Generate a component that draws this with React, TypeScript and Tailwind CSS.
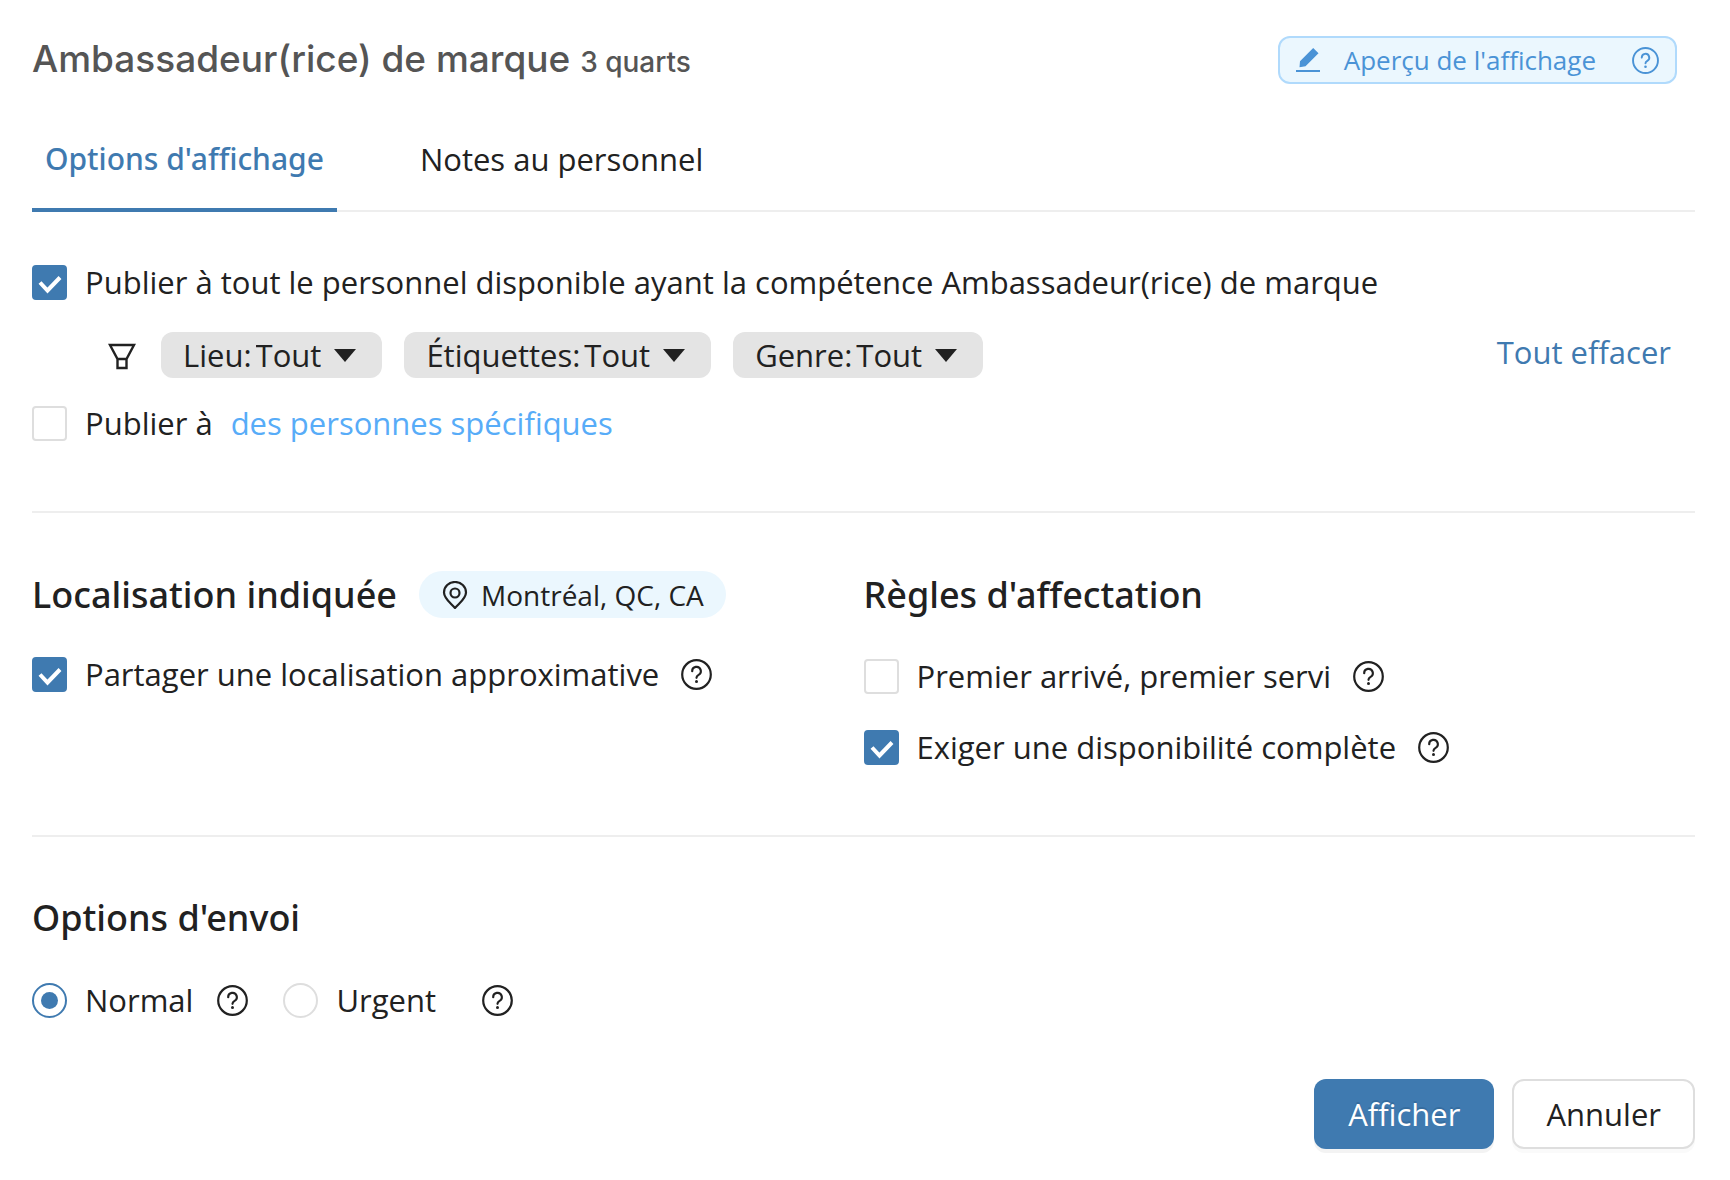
import { useState } from "react";
import type { ReactNode } from "react";

function HelpIcon({ className }: { className: string }) {
  return (
    <svg viewBox="0 0 31 31" fill="none" stroke="currentColor" strokeWidth="2.2" strokeLinecap="round" className={className} aria-hidden="true">
      <circle cx="15.5" cy="15.5" r="14.3" />
      <path d="M11.2 12.2a4.3 4.3 0 1 1 6.4 3.7c-1.4.8-2.1 1.500-2.1 2.900" />
      <circle cx="15.5" cy="22.6" r="1.5" fill="currentColor" stroke="none" />
    </svg>
  );
}

function Help({ label, className = "" }: { label: string; className?: string }) {
  return (
    <button type="button" aria-label={label} className={`shrink-0 ${className}`}>
      <HelpIcon className="size-[31px]" />
    </button>
  );
}

function CheckRow({ id, checked, children }: { id: string; checked?: boolean; children: ReactNode }) {
  return (
    <label htmlFor={id} className="flex items-center gap-[18px]">
      <span className="grid shrink-0">
        <input
          id={id}
          type="checkbox"
          defaultChecked={checked}
          className="peer col-start-1 row-start-1 size-[35px] appearance-none rounded-[4px] border-2 border-[#dedede] bg-white checked:border-[#3f7ab0] checked:bg-[#3f7ab0]"
        />
        <svg viewBox="0 0 35 35" className="pointer-events-none invisible col-start-1 row-start-1 size-[35px] peer-checked:visible" aria-hidden="true">
          <path d="M8 17.500l7.500 8L28 12.500" fill="none" stroke="#fff" strokeWidth="4" />
        </svg>
      </span>
      <span>{children}</span>
    </label>
  );
}

function RadioRow({ id, checked, children }: { id: string; checked?: boolean; children: ReactNode }) {
  return (
    <label htmlFor={id} className="flex items-center gap-[18px]">
      <span className="grid shrink-0 place-items-center">
        <input
          id={id}
          type="radio"
          name="envoi"
          defaultChecked={checked}
          className="peer col-start-1 row-start-1 size-[35px] appearance-none rounded-full border-2 border-[#dedede] bg-white checked:border-[#3f7ab0]"
        />
        <span className="pointer-events-none invisible col-start-1 row-start-1 size-[17px] rounded-full bg-[#3f7ab0] peer-checked:visible" />
      </span>
      <span>{children}</span>
    </label>
  );
}

function Filter({ id, label }: { id: string; label: string }) {
  return (
    <div className="flex h-[46px] items-center rounded-xl bg-[#e4e4e4] px-[22px]">
      <label htmlFor={id}>{label}:</label>
      <select id={id} className="field-sizing-content ml-1 appearance-none bg-transparent">
        <option>Tout</option>
      </select>
      <svg viewBox="0 0 22 13" className="pointer-events-none mr-1 ml-[13px] h-[13px] w-[22px]" aria-hidden="true">
        <path d="M0 0h22L11 13z" fill="currentColor" />
      </svg>
    </div>
  );
}

const filters = [
  { id: "lieu", label: "Lieu" },
  { id: "etiquettes", label: "Étiquettes" },
  { id: "genre", label: "Genre" },
];

const tabs = ["Options d'affichage", "Notes au personnel"];

export default function App() {
  const [tab, setTab] = useState(tabs[0]);

  return (
    <main className="min-h-screen bg-white pt-9 pr-[35px] pb-8 pl-8 font-['Open_Sans',sans-serif] text-[31px] leading-[42px] text-[#212121]">
      <header className="flex items-center justify-between pr-[18px]">
        <h1 className="font-['Inter','Open_Sans',sans-serif] text-[37px] font-medium text-[#555]">
          Ambassadeur(rice) de marque <span className="text-[28px]">3 quarts</span>
        </h1>
        <button type="button" className="flex h-12 items-center rounded-xl border-2 border-[#b0dafc] bg-[#ebf7fe] px-4 text-[26px] text-[#4a93d6]">
          <svg viewBox="0 0 24 24" className="size-6" fill="currentColor" aria-hidden="true">
            <path d="M0 22h24v2H0zM3.5 19.2l.5-6L17.2 0l5.3 5.2L9.5 18.2z" />
          </svg>
          <span className="mr-9 ml-6">Aperçu de l'affichage</span>
          <HelpIcon className="size-[27px]" />
        </button>
      </header>

      <div role="tablist" className="mt-12 flex gap-[70px] border-b-2 border-[#eee]">
        {tabs.map((name) => (
          <button
            key={name}
            type="button"
            role="tab"
            aria-selected={tab === name}
            onClick={() => setTab(name)}
            className={`-mb-0.5 border-b-4 px-[13px] pt-1.5 pb-7 ${
              tab === name
                ? "border-[#3f7ab0] font-['Noto_Sans','Open_Sans',sans-serif] text-[30px] font-medium text-[#3f7ab0]"
                : "border-transparent"
            }`}
          >
            {name}
          </button>
        ))}
      </div>

      <section className="border-b-2 border-[#eee] pt-[49px] pb-[67px]">
        <CheckRow id="tous" checked>
          Publier à tout le personnel disponible ayant la compétence Ambassadeur(rice) de marque
        </CheckRow>
        <div className="mt-7 mb-[23px] flex items-center gap-[22px] pr-6 pl-[76px]">
          <svg viewBox="0 0 28 28" className="mt-1 mr-[3px] size-7" fill="none" stroke="currentColor" strokeWidth="2.4" aria-hidden="true">
            <path d="M2 2h24L18.500 16h-9zM9.500 16v9h9v-9" />
          </svg>
          {filters.map((f) => (
            <Filter key={f.id} id={f.id} label={f.label} />
          ))}
          <button type="button" className="ml-auto pb-1.5 text-[#3f7ab0]">Tout effacer</button>
        </div>
        <div className="flex items-center gap-[18px]">
          <CheckRow id="specifiques">Publier à</CheckRow>
          <a href="#personnes" className="text-[#57acf8]">des personnes spécifiques</a>
        </div>
      </section>

      <div className="grid grid-cols-2 border-b-2 border-[#eee] pt-[58px] pb-[67px]">
        <section>
          <div className="flex items-center gap-[22px]">
            <h2 className="font-['Noto_Sans','Open_Sans',sans-serif] text-[36px] font-medium">Localisation indiquée</h2>
            <span className="flex h-[47px] items-center gap-3 rounded-full bg-[#ebf7fe] px-[22px] text-[28px]">
              <svg viewBox="0 0 28 28" className="size-7" fill="none" stroke="currentColor" strokeWidth="2.2" aria-hidden="true">
                <path d="M14 27C9 21.500 3 17.500 3 11.500a11 10.500 0 0 1 22 0C25 17.500 19 21.500 14 27z" />
                <circle cx="14" cy="12" r="4.5" />
              </svg>
              Montréal, QC, CA
            </span>
          </div>
          <div className="mt-[35px] flex items-center">
            <CheckRow id="approximative" checked>Partager une localisation approximative</CheckRow>
            <Help label="Aide sur la localisation" className="ml-[22px]" />
          </div>
        </section>
        <section>
          <h2 className="flex h-[47px] items-center font-['Noto_Sans','Open_Sans',sans-serif] text-[36px] font-medium">Règles d'affectation</h2>
          <div className="mt-[37px] flex items-center">
            <CheckRow id="premier">Premier arrivé, premier servi</CheckRow>
            <Help label="Aide sur l'ordre d'arrivée" className="ml-[22px]" />
          </div>
          <div className="mt-[29px] flex items-center">
            <CheckRow id="complete" checked>Exiger une disponibilité complète</CheckRow>
            <Help label="Aide sur la disponibilité" className="ml-[22px]" />
          </div>
        </section>
      </div>

      <section className="pt-[60px]">
        <h2 className="font-['Noto_Sans','Open_Sans',sans-serif] text-[36px] font-medium">Options d'envoi</h2>
        <div className="mt-10 flex items-center">
          <RadioRow id="normal" checked>Normal</RadioRow>
          <Help label="Aide sur l'envoi normal" className="mr-[35px] ml-6" />
          <RadioRow id="urgent">Urgent</RadioRow>
          <Help label="Aide sur l'envoi urgent" className="ml-[46px]" />
        </div>
      </section>

      <footer className="mt-[58px] flex justify-end gap-[18px]">
        <button type="button" className="h-[70px] rounded-xl bg-[#3f7ab0] px-[34px] text-white shadow-[0_4px_0_#f3f3f3] text-shadow-[0_-2px_0_#366d9f]">
          Afficher
        </button>
        <button type="button" className="h-[70px] rounded-xl border-2 border-[#dedede] bg-white px-8 shadow-[0_4px_0_#fafafa]">
          Annuler
        </button>
      </footer>
    </main>
  );
}
